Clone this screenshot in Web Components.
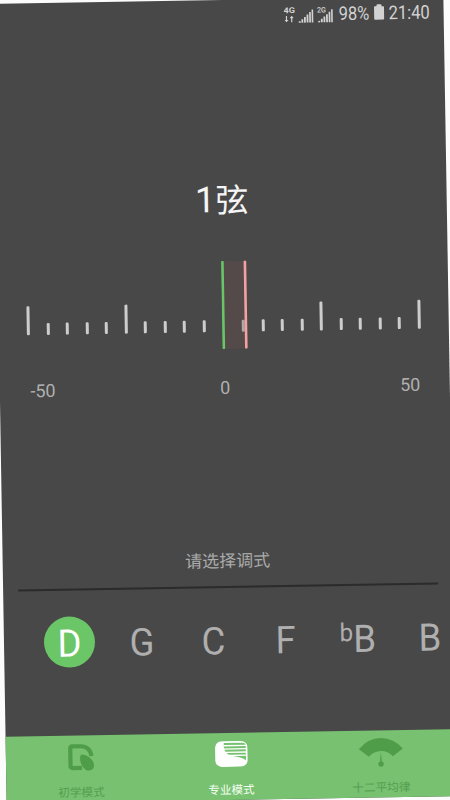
<!DOCTYPE html>
<html lang="zh-CN"><head><meta charset="utf-8"><title>调音器</title>
<style>html,body{margin:0;width:450px;height:800px;overflow:hidden;background:#fcfcfc}</style></head>
<body><tuner-app></tuner-app>
<script>
const define=(name,html,setup)=>customElements.define(name,class extends HTMLElement{
  connectedCallback(){
    if(this.shadowRoot)return;
    const t=document.createElement('template');t.innerHTML=html;
    this.attachShadow({mode:'open'}).append(t.content.cloneNode(true));
    if(setup)setup(this,this.shadowRoot);
  }
});

define('status-bar',`<style>
:host{display:flex;height:32px;box-sizing:border-box;padding-right:13px;justify-content:flex-end;align-items:center;color:#d2d2d2;font-size:19px;line-height:30px}
svg{display:block;flex:none}span{display:inline-block;white-space:nowrap}
.p{width:31px;margin-left:3px}.p b,.t b{display:block;font-weight:400;transform:scaleX(.87);transform-origin:0 50%}
.t{width:42px;margin-left:4px}
</style>
<svg width="52" height="18" viewBox="0 0 52 18" fill="#d2d2d2"><text x="0" y="7.2" font-size="8" font-weight="700" textLength="11.500" lengthAdjust="spacingAndGlyphs">4G</text>
<path d="M3.400 10v4h1.400l-2 2.400-2-2.400h1.400v-4zM7.400 16.300v-4H6l2-2.500 2 2.500H8.600v4z"/>
<path d="M15 15.500h2v1.500h-2zM17.700 13.500h1.800V17h-1.800zM20.300 11.300h1.800V17h-1.800zM22.900 9h1.800v8h-1.800zM25.500 6.500h1.700V17h-1.700zM28 4h1.600v13H28z"/>
<text x="33.300" y="7.200" font-size="7.500" font-weight="500" textLength="9" lengthAdjust="spacingAndGlyphs">2G</text>
<path d="M34.500 15.500h2v1.500h-2zM37.200 13.500h1.800V17h-1.800zM39.800 11.300h1.800V17h-1.800zM42.400 9h1.800v8h-1.800zM45 6.500h1.700V17H45zM47.500 4h1.600v13h-1.600z"/></svg>
<span class="p"><b>98%</b></span>
<svg width="11" height="17" viewBox="0 0 11 17" style="margin:0 0 3px 4px"><path d="M3 1.900q0-1 1-1h3q1 0 1 1v1h1.600q.9 0 .9.900v11.400q0 1-.9 1H1.400q-.9 0-.9-1V3.800q0-.9.900-.9H3z" fill="#d2d2d2"/></svg>
<span class="t"><b>21:40</b></span>`);

define('string-title',`<style>:host{display:flex;justify-content:center;align-items:baseline;color:#f5f5f5;font-size:33px;line-height:48px}b{font-weight:400;font-size:36px}</style><b><slot name="number"></slot></b><slot></slot>`);

define('cents-gauge',`<style>
:host{display:block;padding:0 28px}
.scale{display:flex;justify-content:space-between;align-items:flex-end;height:88px;box-sizing:border-box;padding-bottom:17px;position:relative}
i{display:block;width:3px;height:12.500px;border-radius:1.200px;background:#cdcdcd}i.l{height:29px}
i.c{background:none}
.band{position:absolute;left:195px;top:0;display:block}
.labels{display:grid;grid-template-columns:1fr 1fr 1fr;margin:28px 1.500px 0;padding-left:1px;color:#b0b0b0;font-size:18px;line-height:22px}
.labels span:nth-child(2){text-align:center}.labels span:nth-child(3){text-align:right}
</style><div class="scale"><svg class="band" width="28" height="88" viewBox="0 0 28 88"><path d="M1 0h24v88H1z" fill="#725050" fill-opacity=".3"/><path d="M1.700 1v86" stroke="#69c568" stroke-width="2.600" stroke-linecap="round"/><path d="M24.200 1v86" stroke="#f6a1a1" stroke-width="2.600" stroke-linecap="round"/></svg></div><div class="labels"><span>-50</span><span>0</span><span>50</span></div>`,(h,r)=>{
  const s=r.querySelector('.scale');
  for(let n=-10;n<=10;n++){const i=document.createElement('i');i.className=n===0?'c':n%5===0?'l':'';s.append(i)}
});

define('key-option',`<style>
:host{display:flex;flex:none;width:51px;height:51px;border-radius:50%;align-items:center;justify-content:center;color:#afafaf;font-size:38px;line-height:51px}
:host([selected]){background:#6ac666;color:#fff}
div{position:relative;top:1.500px;left:0;white-space:nowrap;transform:scaleX(.96)}sup{font-size:25px;line-height:0;vertical-align:11px}
</style><div><sup></sup><slot></slot></div>`,(h,r)=>{const s=r.querySelector('sup');h.getAttribute('accidental')?s.textContent=h.getAttribute('accidental'):s.remove()});

define('key-picker',`<style>
:host{display:block}
h2{margin:0 15px;height:38px;border-bottom:2px solid #2b2b2b;text-align:center;font-size:17px;font-weight:400;line-height:27px;color:#ababab}
.row{display:flex;gap:21px;padding:26px 0 0 40px}
</style><h2><slot name="title"></slot></h2><div class="row"><slot></slot></div>`);

define('nav-item',`<style>
:host{display:flex;flex:1;flex-direction:column;align-items:center;color:#559e50;font-size:11.600px;line-height:16px}
:host([active]){color:#f6fff4}
.i{height:38.500px;display:flex;align-items:flex-end;margin-bottom:10.500px}
</style><div class="i"><slot name="icon"></slot></div><span><slot></slot></span>`);

define('nav-bar',`<style>:host{display:flex;height:67.500px;background:#77c170}svg{display:block}</style>
<nav-item><svg slot="icon" width="28" height="30" viewBox="0 0 28 30" style="margin-bottom:1px"><path d="M15 25.500H5.500q-2 0-2-2V5.800q0-2 2-2h8.300q9.500.2 10.700 10" fill="none" stroke="#4f9c49" stroke-width="4.200"/><path d="M15 12C20 12 27 17.500 27 23 27 26.500 24.500 28.300 21.500 28.300 16.500 28.300 12.200 20 13.300 14Q13.700 12.200 15 12Z" fill="#4f9c49" stroke="#77c170" stroke-width="1" paint-order="stroke"/></svg>初学模式</nav-item>
<nav-item active><svg slot="icon" width="33" height="26" viewBox="0 0 33 26" style="margin-bottom:4.500px"><rect x=".3" y=".2" width="32.400" height="25.600" rx="6.500" fill="#fff"/><path d="M9 2h18q3.400 0 4 2.500v15C24 14.500 13 16.500 10 10Q8.700 7 9 2Z" fill="#77c170"/><path d="M9 4.700h22.500M9 8h22.500M10 11.300h21.500M14 14.500h17.500" stroke="#fff" stroke-width="1.300"/></svg>专业模式</nav-item>
<nav-item><svg slot="icon" width="46" height="31" viewBox="0 0 46 31" style="margin-bottom:1px"><path d="M1 12.500Q10 1.500 23 1.500T45 12.500L35 20Q30 14.500 23 14.500T11 20Z" fill="#4f9c49"/><path d="M23 15.500l.9 9.200h-1.800z" fill="#4f9c49"/><circle cx="23" cy="27.500" r="2.700" fill="#4f9c49"/></svg>十二平均律</nav-item>`);

define('tuner-app',`<style>
:host{display:flex;flex-direction:column;width:450px;height:800px;background:#484848;transform:rotate(-.95deg);font-family:Roboto,"Noto Sans CJK SC",sans-serif}
string-title{margin-top:144px}cents-gauge{margin-top:36px}key-picker{margin-top:149px}nav-bar{margin-top:auto}
</style><status-bar></status-bar><string-title><span slot="number">1</span>弦</string-title><cents-gauge></cents-gauge>
<key-picker><span slot="title">请选择调式</span><key-option selected>D</key-option><key-option>G</key-option><key-option>C</key-option><key-option>F</key-option><key-option accidental="b">B</key-option><key-option>B</key-option></key-picker><nav-bar></nav-bar>`);
</script></body></html>
